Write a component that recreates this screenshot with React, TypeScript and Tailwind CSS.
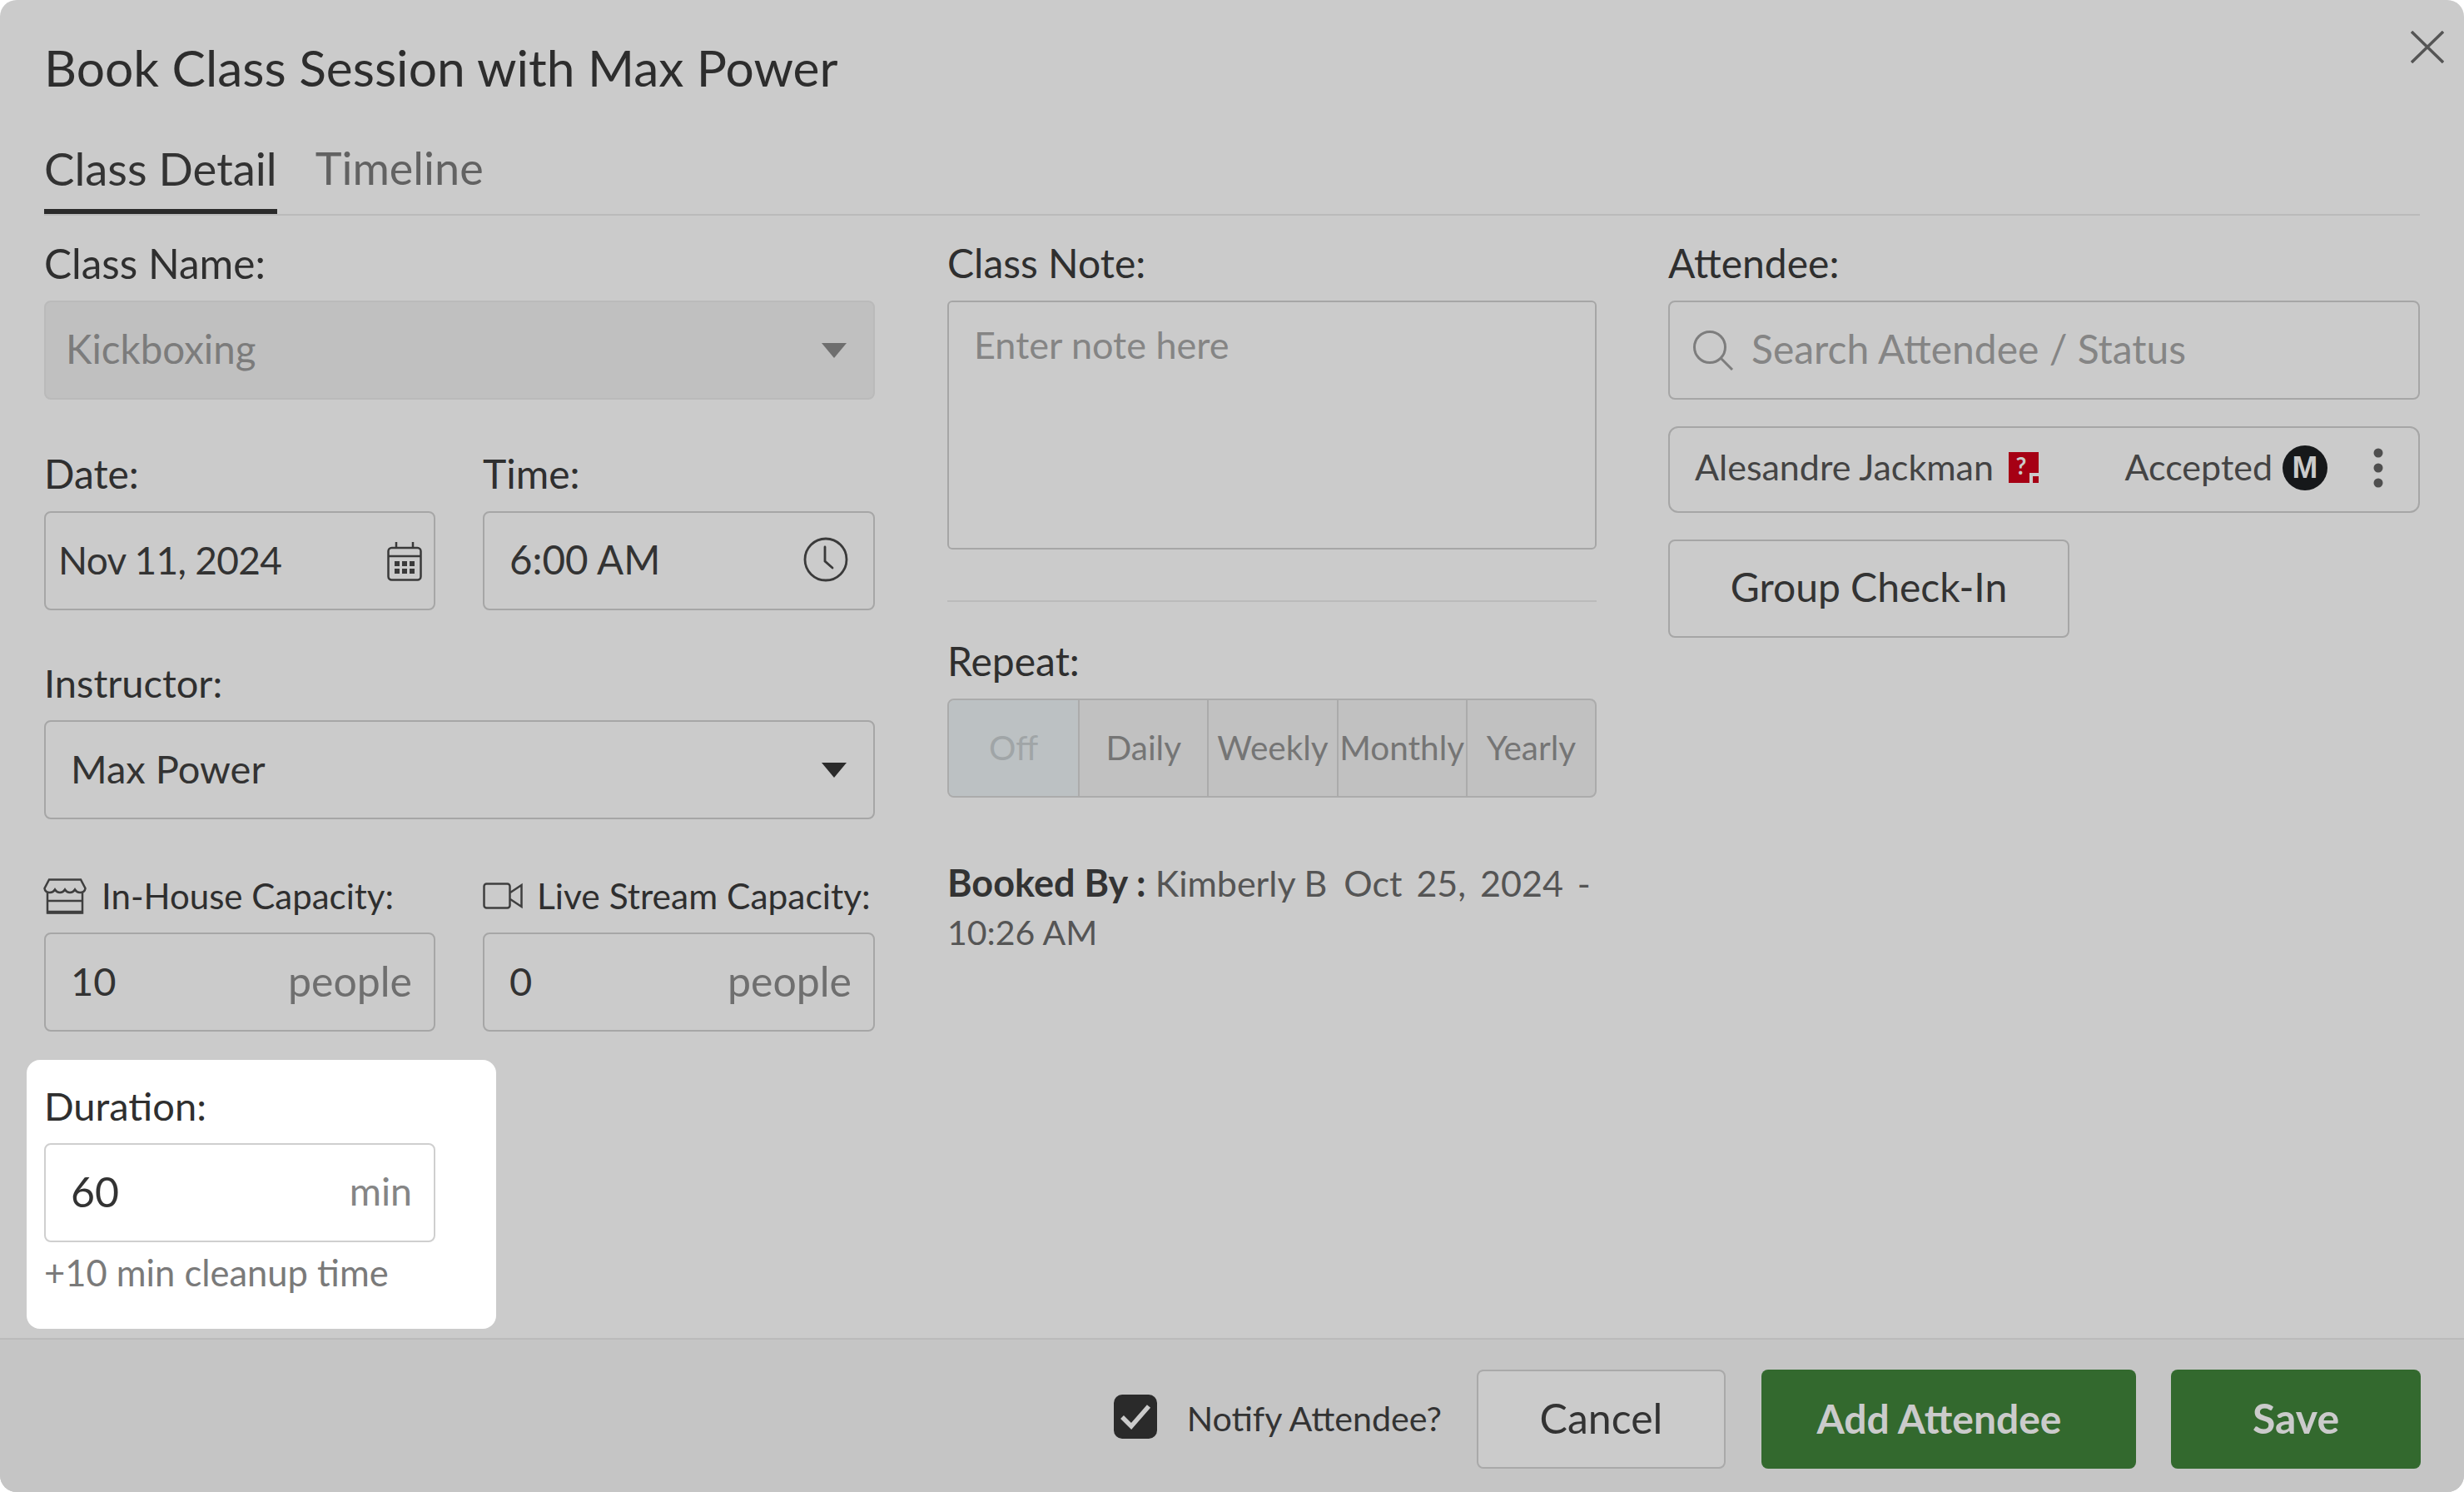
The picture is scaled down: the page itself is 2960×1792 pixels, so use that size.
import React from "react";

function Label({ children, size = "text-[48px]" }: { children: React.ReactNode; size?: string }) {
  return <div className={`h-[58px] mb-[15px] pb-[2px] flex items-center leading-[56px] text-[#2f2f2f] ${size}`}>{children}</div>;
}

function Caret({ color }: { color: string }) {
  return (
    <svg width="30" height="18" viewBox="0 0 30 18" className="shrink-0">
      <path d="M0 0H30L15 18Z" fill={color} />
    </svg>
  );
}

function Unit({ value, unit, white, valueSize = "text-[47px]", unitSize = "text-[50px]" }: { value: string; unit: string; white?: boolean; valueSize?: string; unitSize?: string }) {
  return (
    <div className={`h-[119px] pb-[3px] flex items-center justify-between pl-[30px] pr-[26px] border-2 rounded-[8px] ${white ? "border-[#cfcfcf] bg-white" : "border-[#a6a6a6]"}`}>
      <span className={`text-[#333333] ${valueSize}`}>{value}</span>
      <span className={`${unitSize} ${white ? "text-[#858585]" : "text-[#6f6f6f]"}`}>{unit}</span>
    </div>
  );
}

export default function App() {
  return (
    <div className="w-[2960px] h-[1792px] bg-white [font-family:Lato,sans-serif]">
      <div className="relative w-full h-full rounded-[20px] overflow-hidden bg-[#cbcbcb] flex flex-col">
        <button className="absolute right-[24px] top-[37px]" aria-label="Close">
          <svg width="40" height="39" viewBox="0 0 40 39" fill="none" stroke="#555555" strokeWidth="3.5">
            <path d="M1 1L39 38M39 1L1 38" />
          </svg>
        </button>

        <div className="flex-1 min-h-0 px-[53px] pt-[46px]">
          <h1 className="text-[60.500px] leading-[70px] text-[#2d2d2d] font-normal">Book Class Session with Max Power</h1>
          <div className="mt-[51px] flex gap-[46px] border-b-2 border-[#bbbbbb]">
            <div className="h-[90px] pb-[14px] border-b-[6px] border-[#2b2b2b] text-[54.500px] leading-[70px] text-[#333333]">Class Detail</div>
            <div className="h-[90px] text-[54px] leading-[70px] text-[#626262]">Timeline</div>
          </div>

          <div className="pt-[29px] flex gap-[87px]">
            {/* Column 1 */}
            <div className="w-[998px] shrink-0">
              <Label size="text-[49.500px]">Class Name:</Label>
              <div className="h-[119px] flex items-center justify-between pl-[24px] pr-[32px] rounded-[8px] border-2 border-[#bababa] bg-[#c0c0c0] text-[47.500px] text-[#7c7c7c]">
                <span className="pb-[3px]">Kickboxing</span>
                <Caret color="#6e6e6e" />
              </div>

              <div className="mt-[61px] grid grid-cols-[470px_471px] gap-x-[57px]">
                <div>
                  <Label>Date:</Label>
                  <div className="h-[119px] flex items-center justify-between pl-[15px] pr-[14px] border-2 border-[#a6a6a6] rounded-[8px] text-[46px] tracking-[-0.700px] text-[#333333]">
                    <span className="pb-[3px]">Nov 11, 2024</span>
                    <svg width="42" height="48" viewBox="0 0 42 48" fill="none" stroke="#3a3a3a" strokeWidth="2.5">
                      <rect x="1.500" y="8" width="39" height="38.500" rx="4" />
                      <path d="M1.500 18H40.500M11 1V8M31 1V8" />
                      <g fill="#3a3a3a" stroke="none">
                        <rect x="9" y="24" width="6" height="6" /><rect x="18" y="24" width="6" height="6" /><rect x="27" y="24" width="6" height="6" />
                        <rect x="9" y="33" width="6" height="6" /><rect x="18" y="33" width="6" height="6" /><rect x="27" y="33" width="6" height="6" />
                      </g>
                    </svg>
                  </div>
                </div>
                <div>
                  <Label>Time:</Label>
                  <div className="h-[119px] pb-[4px] flex items-center justify-between pl-[30px] pr-[30px] border-2 border-[#a6a6a6] rounded-[8px] text-[47.500px] text-[#333333]">
                    <span>6:00 AM</span>
                    <svg width="54" height="54" viewBox="0 0 54 54" fill="none" stroke="#3a3a3a" strokeWidth="2.800" strokeLinecap="round">
                      <circle cx="27" cy="27" r="25" />
                      <path d="M26 12V29L35 37" />
                    </svg>
                  </div>
                </div>
              </div>

              <div className="mt-[59px]">
                <Label size="text-[47px]">Instructor:</Label>
                <div className="h-[119px] flex items-center justify-between pl-[30px] pr-[32px] border-2 border-[#a6a6a6] rounded-[8px] text-[47px] text-[#333333]">
                  <span className="pb-[3px]">Max Power</span>
                  <Caret color="#2b2b2b" />
                </div>
              </div>

              <div className="mt-[63px] grid grid-cols-[470px_471px] gap-x-[57px]">
                <div>
                  <div className="h-[58px] mb-[15px] flex items-center gap-[18px] text-[42px] whitespace-nowrap text-[#2f2f2f]">
                    <svg width="52" height="43" viewBox="0 0 52 43" fill="none" stroke="#3f3f3f" strokeWidth="2.500" className="shrink-0 -ml-[1px]">
                      <path d="M7 1.500H45L50.500 12C50 15.500 47.500 17 44 17C41 17 39.500 16 38 13.500C36.500 16 34.500 17 32 17C29.500 17 27.500 16 26 13.500C24.500 16 22.500 17 20 17C17.500 17 15.500 16 14 13.500C12.500 16 11 17 8 17C4.500 17 2 15.500 1.500 12Z" />
                      <path d="M5 17V41.500H47V17M5 27H47" />
                      <path d="M5 40.500H47" strokeWidth="3.500" />
                    </svg>
                    <span>In-House Capacity:</span>
                  </div>
                  <Unit value="10" unit="people" />
                </div>
                <div>
                  <div className="h-[58px] mb-[15px] flex items-center gap-[17px] text-[42.500px] whitespace-nowrap text-[#2f2f2f]">
                    <svg width="48" height="32" viewBox="0 0 48 32" fill="none" stroke="#3f3f3f" strokeWidth="2.500" className="shrink-0">
                      <rect x="1.500" y="1.500" width="31" height="29" rx="3" />
                      <path d="M33 12L46.500 3V29L33 20" />
                    </svg>
                    <span>Live Stream Capacity:</span>
                  </div>
                  <Unit value="0" unit="people" />
                </div>
              </div>

              <div className="mt-[34px] -ml-[21px] w-[564px] h-[323px] bg-white rounded-[16px] pl-[21px] pr-[73px] pt-[27px]">
                <Label size="text-[47px]">Duration:</Label>
                <Unit value="60" unit="min" white valueSize="text-[50px]" unitSize="text-[46.500px]" />
                <div className="mt-[9px] h-[58px] pb-[2px] flex items-center text-[43.500px] text-[#7a7a7a]">+10 min cleanup time</div>
              </div>
            </div>

            {/* Column 2 */}
            <div className="w-[780px] shrink-0">
              <Label>Class Note:</Label>
              <div className="h-[299px] border-2 border-[#a6a6a6] rounded-[6px] pl-[30px] pt-[22px] text-[45px] leading-[58px] text-[#858585]">Enter note here</div>
              <div className="mt-[61px] border-t-2 border-[#bbbbbb]" />
              <div className="mt-[43px]">
                <Label>Repeat:</Label>
                <div className="h-[119px] grid grid-cols-5 rounded-[8px] border-2 border-[#ababab] bg-[#c1c1c1] text-[40.500px] text-[#757575] overflow-hidden">
                  <div className="flex items-center justify-center bg-[#bcc1c3] outline-2 outline-[#a7b6c1] text-[#a0a5a7]">Off</div>
                  <div className="flex items-center justify-center border-l-2 border-[#ababab]">Daily</div>
                  <div className="flex items-center justify-center border-l-2 border-[#ababab]">Weekly</div>
                  <div className="flex items-center justify-center border-l-2 border-[#ababab]">Monthly</div>
                  <div className="flex items-center justify-center border-l-2 border-[#ababab]">Yearly</div>
                </div>
              </div>
              <div className="mt-[73px] text-[43px] leading-[58px] text-[#555555]">
                <span className="text-[45px] font-bold text-[#333333]">Booked By : </span>
                <span>Kimberly B</span>
                <span className="ml-[20px] [word-spacing:6px]">Oct 25, 2024 -</span>{" "}
                <span className="text-[41px]">10:26&nbsp;AM</span>
              </div>
            </div>

            {/* Column 3 */}
            <div className="flex-1 min-w-0 -ml-[1px]">
              <Label>Attendee:</Label>
              <div className="h-[119px] flex items-center gap-[21px] pl-[27px] border-2 border-[#a6a6a6] rounded-[8px] text-[48px] text-[#858585]">
                <svg width="50" height="48" viewBox="0 0 50 48" fill="none" stroke="#7d7d7d" strokeWidth="3" className="shrink-0">
                  <circle cx="21" cy="20" r="18.500" />
                  <path d="M34 33L48 47" />
                </svg>
                <span className="pb-[3px]">Search Attendee / Status</span>
              </div>
              <div className="mt-[32px] h-[104px] flex items-center justify-between pl-[30px] pr-[42px] pb-[5px] border-2 border-[#a6a6a6] rounded-[12px] text-[43px] text-[#444444]">
                <div className="flex items-center gap-[18px]">
                  <span>Alesandre Jackman</span>
                  <span className="relative w-[36px] h-[37px] bg-[#a60014] flex items-center justify-center text-[28px] leading-none font-bold text-[#cbcbcb] pb-[6px] pr-[6px]">
                    ?
                    <span className="absolute right-0 bottom-0 w-[11px] h-[12px] bg-[#cbcbcb] flex items-end justify-end">
                      <span className="block w-[7px] h-[8px] bg-[#a60014]" />
                    </span>
                  </span>
                </div>
                <div className="flex items-center">
                  <span>Accepted</span>
                  <span className="ml-[12px] w-[54px] h-[54px] rounded-full bg-[#16181a] flex items-center justify-center text-[37px] font-bold [font-family:'Liberation_Sans',sans-serif] text-[#cbcbcb]">M</span>
                  <svg width="12" height="48" viewBox="0 0 12 48" className="ml-[55px]" fill="#4f4f4f">
                    <circle cx="6" cy="6" r="5.500" /><circle cx="6" cy="24" r="5.500" /><circle cx="6" cy="42" r="5.500" />
                  </svg>
                </div>
              </div>
              <button className="mt-[32px] w-[482px] h-[118px] pb-[5px] border-2 border-[#a6a6a6] rounded-[8px] text-[48px] text-[#333333]">Group Check-In</button>
            </div>
          </div>
        </div>

        <div className="h-[185px] shrink-0 bg-[#c5c5c5] border-t-2 border-[#bbbbbb] pr-[52px] pt-[36px] flex justify-end items-start">
          <div className="flex items-center h-[119px]">
            <span className="w-[52px] h-[53px] mb-[6px] rounded-[10px] bg-[#2a2a2a] flex items-center justify-center">
              <svg width="38" height="32" viewBox="0 0 38 32" fill="none" stroke="#cbcbcb" strokeWidth="5.500">
                <path d="M3 16L14 27L35 3" />
              </svg>
            </span>
            <span className="ml-[36px] pb-[2px] text-[41.200px] text-[#333333]">Notify Attendee?</span>
            <button className="ml-[42px] w-[299px] h-[119px] pb-[2px] bg-[#cbcbcb] border-2 border-[#a9a9a9] rounded-[8px] text-[50px] text-[#333333]">Cancel</button>
            <button className="ml-[43px] w-[450px] h-[119px] pb-[2px] pr-[23px] bg-[#33692e] rounded-[8px] text-[48px] font-bold text-[#cbcbcb]">Add Attendee</button>
            <button className="ml-[42px] w-[300px] h-[119px] pb-[2px] bg-[#33692e] rounded-[8px] text-[50px] font-bold text-[#cbcbcb]">Save</button>
          </div>
        </div>
      </div>
    </div>
  );
}
